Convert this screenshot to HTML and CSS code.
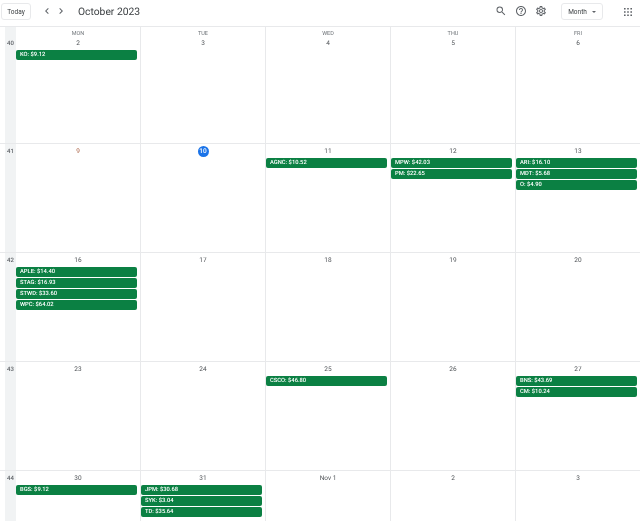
FILE: index.html
```html
<!DOCTYPE html>
<html lang="en">
<head>
<meta charset="utf-8">
<title>Calendar</title>
<link rel="stylesheet" href="styles.css">
</head>
<body>
<header class="topbar">
  <button class="btn today">Today</button>
  <div class="nav">
    <svg class="chev" viewBox="0 0 24 24"><path d="M15.41 7.41 14 6l-6 6 6 6 1.41-1.41L10.830 12z"/></svg>
    <svg class="chev" viewBox="0 0 24 24"><path d="M8.590 7.41 10 6l6 6-6 6-1.41-1.41L13.170 12z"/></svg>
  </div>
  <h1 class="title">October 2023</h1>
  <div class="tools">
    <svg class="ico" viewBox="0 0 24 24"><path d="M15.5 14h-.79l-.28-.27A6.471 6.471 0 0 0 16 9.5 6.500 6.500 0 1 0 9.500 16c1.610 0 3.090-.59 4.230-1.570l.27.28v.79l5 4.990L20.490 19l-4.990-5zm-6 0C7.010 14 5 11.990 5 9.500S7.010 5 9.500 5 14 7.010 14 9.500 11.990 14 9.500 14z"/></svg>
    <svg class="ico" viewBox="0 0 24 24"><path d="M11 18h2v-2h-2v2zm1-16C6.480 2 2 6.480 2 12s4.480 10 10 10 10-4.480 10-10S17.520 2 12 2zm0 18c-4.410 0-8-3.590-8-8s3.590-8 8-8 8 3.590 8 8-3.590 8-8 8zm0-14c-2.210 0-4 1.790-4 4h2c0-1.100.9-2 2-2s2 .9 2 2c0 2-3 1.750-3 5h2c0-2.250 3-2.500 3-5 0-2.210-1.790-4-4-4z"/></svg>
    <svg class="ico" viewBox="0 0 24 24"><path d="M19.43 12.98c.04-.32.07-.64.07-.98 0-.34-.03-.66-.07-.98l2.110-1.650c.19-.15.24-.42.12-.64l-2-3.460c-.09-.16-.26-.25-.44-.25-.06 0-.12.01-.17.03l-2.490 1c-.52-.4-1.080-.73-1.690-.98l-.38-2.650C14.460 2.180 14.250 2 14 2h-4c-.25 0-.46.18-.49.42l-.38 2.650c-.61.25-1.170.59-1.690.98l-2.490-1c-.06-.02-.12-.03-.18-.03-.17 0-.34.09-.43.25l-2 3.460c-.13.22-.07.49.12.64l2.110 1.650c-.04.32-.07.65-.07.98 0 .33.03.66.07.98l-2.110 1.650c-.19.15-.24.42-.12.64l2 3.460c.09.16.26.25.44.25.06 0 .12-.01.17-.03l2.490-1c.52.4 1.080.73 1.690.98l.38 2.650c.03.24.24.42.49.42h4c.25 0 .46-.18.49-.42l.38-2.650c.61-.25 1.170-.59 1.690-.98l2.490 1c.06.02.12.03.18.03.17 0 .34-.09.43-.25l2-3.460c.12-.22.07-.49-.12-.64l-2.110-1.650zm-1.980-1.710c.04.31.05.52.05.73 0 .21-.02.43-.05.73l-.14 1.130.89.7 1.080.84-.7 1.210-1.270-.51-1.040-.42-.9.68c-.43.32-.84.56-1.250.73l-1.060.43-.16 1.130-.2 1.350h-1.400l-.19-1.350-.16-1.130-1.060-.43c-.43-.18-.83-.41-1.230-.71l-.91-.7-1.060.43-1.270.51-.7-1.210 1.080-.84.89-.7-.14-1.130c-.03-.31-.05-.54-.05-.74s.02-.43.05-.73l.14-1.130-.89-.7-1.080-.84.7-1.210 1.270.51 1.040.42.9-.68c.43-.32.84-.56 1.250-.73l1.060-.43.16-1.130.2-1.350h1.390l.19 1.350.16 1.130 1.060.43c.43.18.83.41 1.230.71l.91.7 1.060-.43 1.270-.51.7 1.210-1.070.85-.89.7.14 1.130zM12 8c-2.210 0-4 1.790-4 4s1.790 4 4 4 4-1.790 4-4-1.790-4-4-4zm0 6c-1.100 0-2-.9-2-2s.9-2 2-2 2 .9 2 2-.9 2-2 2z"/></svg>
  </div>
  <button class="btn month">Month<span class="caret"></span></button>
  <svg class="apps" viewBox="0 0 10 10"><path d="M0 0h2v2H0zM4 0h2v2H4zM8 0h2v2H8zM0 4h2v2H0zM4 4h2v2H4zM8 4h2v2H8zM0 8h2v2H0zM4 8h2v2H4zM8 8h2v2H8z"/></svg>
</header>

<main class="cal">
  <section class="week first">
    <div class="wk">40</div>
    <div class="day"><div class="dow">MON</div><div class="num">2</div><div class="ev">KO: $9.12</div></div>
    <div class="day"><div class="dow">TUE</div><div class="num">3</div></div>
    <div class="day"><div class="dow">WED</div><div class="num">4</div></div>
    <div class="day"><div class="dow">THU</div><div class="num">5</div></div>
    <div class="day"><div class="dow">FRI</div><div class="num">6</div></div>
  </section>
  <section class="week">
    <div class="wk">41</div>
    <div class="day"><div class="num red">9</div></div>
    <div class="day"><div class="num"><span class="now">10</span></div></div>
    <div class="day"><div class="num">11</div><div class="ev">AGNC: $10.52</div></div>
    <div class="day"><div class="num">12</div><div class="ev">MPW: $42.03</div><div class="ev">PM: $22.65</div></div>
    <div class="day"><div class="num">13</div><div class="ev">ARI: $16.10</div><div class="ev">MDT: $5.68</div><div class="ev">O: $4.90</div></div>
  </section>
  <section class="week">
    <div class="wk">42</div>
    <div class="day"><div class="num">16</div><div class="ev">APLE: $14.40</div><div class="ev">STAG: $16.93</div><div class="ev">STWD: $33.60</div><div class="ev">WPC: $64.02</div></div>
    <div class="day"><div class="num">17</div></div>
    <div class="day"><div class="num">18</div></div>
    <div class="day"><div class="num">19</div></div>
    <div class="day"><div class="num">20</div></div>
  </section>
  <section class="week">
    <div class="wk">43</div>
    <div class="day"><div class="num">23</div></div>
    <div class="day"><div class="num">24</div></div>
    <div class="day"><div class="num">25</div><div class="ev">CSCO: $46.80</div></div>
    <div class="day"><div class="num">26</div></div>
    <div class="day"><div class="num">27</div><div class="ev">BNS: $43.69</div><div class="ev">CM: $10.24</div></div>
  </section>
  <section class="week last">
    <div class="wk">44</div>
    <div class="day"><div class="num">30</div><div class="ev">BGS: $9.12</div></div>
    <div class="day"><div class="num">31</div><div class="ev">JPM: $30.68</div><div class="ev">SYK: $3.04</div><div class="ev">TD: $35.64</div></div>
    <div class="day"><div class="num">Nov 1</div></div>
    <div class="day"><div class="num">2</div></div>
    <div class="day"><div class="num">3</div></div>
  </section>
</main>
</body>
</html>
```
FILE: styles.css
```css
* { box-sizing: border-box; }
html, body { margin: 0; padding: 0; height: 521px; overflow: hidden; background: #fff; }
body { font-family: Roboto, "Liberation Sans", sans-serif; color: #3c4043; text-rendering: geometricPrecision; }
.topbar { height: 27px; display: flex; align-items: flex-start; border-bottom: 1px solid #e8e9eb; will-change: transform; }
.btn { font: 400 6.500px Roboto, sans-serif; color: #3c4043; background: #fff; border: 1px solid #e8e9eb; border-radius: 3px; height: 17px; padding: 0; margin-top: 3px; display: flex; align-items: center; justify-content: center; }
.today { width: 30px; margin-left: 1px; }
.nav { display: flex; margin-left: 10px; gap: 2px; margin-top: 5px; }
.chev { width: 12px; height: 12px; fill: #5f6368; }
.title { font: 400 10.300px Roboto, sans-serif; color: #3c4043; margin: 3px 0 0 11px; line-height: 17px; }
.tools { margin-left: auto; display: flex; gap: 8px; margin-top: 5px; }
.ico { width: 12px; height: 12px; fill: #5f6368; }
.month { width: 42px; margin-left: 14px; gap: 5px; }
.caret { width: 0; height: 0; border: 2px solid transparent; border-top: 2px solid #5f6368; border-bottom: 0; }
.apps { width: 8px; height: 8px; fill: #5f6368; margin: 8px 8px 0 21px; }
.cal { display: flex; flex-direction: column; will-change: transform; }
.week { display: flex; height: 109px; border-bottom: 1px solid #e8e9eb; }
.week.first { height: 117px; }
.week.last { border-bottom: 0; height: 50px; }
.wk { width: 11px; margin-left: 5px; flex: none; background: #f1f3f4; font: 500 6px/7px Roboto, sans-serif; color: #5f6368; text-align: center; padding: 4px 0 0; }
.first .wk { padding-top: 13px; }
.day { flex: 1 1 0; min-width: 0; border-right: 1px solid #e8e9eb; padding-top: 4px; }
.day:last-child { border-right: 0; }
.dow { font: 400 5.500px/7px Roboto, sans-serif; text-align: center; color: #70757a; }
.num { font: 400 6.500px/7px Roboto, sans-serif; text-align: center; color: #4f5357; margin-bottom: 3px; min-height: 7px; }
.first .dow { margin-bottom: 2px; }
.first .num { margin-bottom: 3px; }
.red { color: #a5583a; }
.now { display: inline-flex; align-items: center; justify-content: center; width: 11px; height: 11px; margin-top: -2px; border-radius: 50%; background: #1a73e8; color: #fff; font-weight: 500; vertical-align: top; }
.ev { width: calc(100% - 3.500px); height: 10px; margin-bottom: 1px; background: #0b8043; border-radius: 2px; color: #fff; font: 500 5.800px/10px Roboto, sans-serif; padding-left: 4px; white-space: nowrap; }
```
